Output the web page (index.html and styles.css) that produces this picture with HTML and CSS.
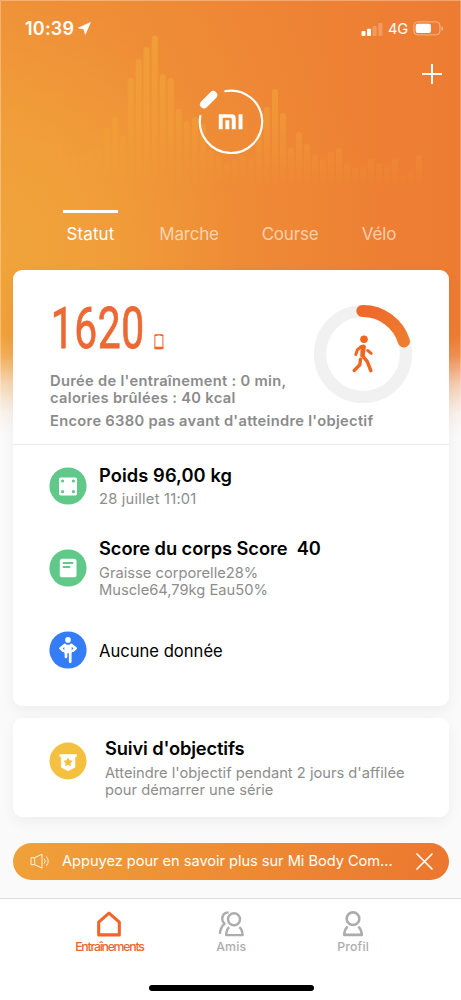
FILE: index.html
```
<!DOCTYPE html>
<html lang="fr">
<head>
<meta charset="utf-8">
<meta name="viewport" content="width=device-width, initial-scale=1">
<title>Mi Fit</title>
<link rel="stylesheet" href="styles.css">
</head>
<body>
<div class="screen">
  <div class="backdrop">
    <svg class="wave" width="461" height="200" viewBox="0 0 461 200" aria-hidden="true">
      <defs>
        <linearGradient id="waveFade" gradientUnits="userSpaceOnUse" x1="0" y1="30" x2="0" y2="188">
          <stop offset="0" stop-color="#f1a337" stop-opacity=".8"/>
          <stop offset=".6" stop-color="#f1a337" stop-opacity=".5"/>
          <stop offset="1" stop-color="#f1a337" stop-opacity="0"/>
        </linearGradient>
      </defs>
      <path stroke="url(#waveFade)" stroke-width="6" stroke-linecap="round" fill="none" d="M42.3 155V190M50.4 147V190M58.5 147V190M66.6 158V190M74.7 158V190M82.7 158V190M90.7 151V190M98.7 151V190M106.7 131V190M114.7 120V190M122.8 139V190M130.8 81V190M138.7 62V190M146.5 50V190M154.7 38.5V190M162.7 77V190M170.7 81V190M178.8 112V190M186.7 124V190M194.7 120V190M202.7 127V190M210.7 153V190M218.7 158V190M226.7 166V190M234.7 162V190M242.7 158V190M250.7 162V190M258.8 136V190M266.8 110V190M275 92V190M283 116V190M291 151V190M299 135V190M307 147V190M315 158V190M323 162V190M331 155V190M339 151V190M347 166V190M355 170V190M363 170V190M371 162V190M379 166V190M387 170V190M395 162V190M403 178V190M411 174V190M419 158V190"/>
    </svg>
  </div>

  <header class="status-bar">
    <div class="clock">
      <span class="time">10:39</span>
      <svg width="13" height="13" viewBox="0 0 13 13"><path d="M12.4.5 7.3 12.3 6 7 .4 6Z" fill="#fff" stroke="#fff" stroke-width=".7" stroke-linejoin="round"/></svg>
    </div>
    <div class="signals">
      <svg width="22" height="14" viewBox="0 0 22 14" fill="#fff"><rect x=".5" y="9" width="4" height="5" rx="1"/><rect x="6" y="6.7" width="4" height="7.3" rx="1"/><rect x="11.6" y="4" width="4" height="10" rx="1" opacity=".22"/><rect x="17.4" y="1" width="4" height="13" rx="1" opacity=".22"/></svg>
      <span class="network">4G</span>
      <svg width="31" height="15" viewBox="0 0 31 15"><rect x=".9" y=".9" width="26" height="13" rx="3.6" fill="none" stroke="#fff" stroke-opacity=".42"/><rect x="2.7" y="2.7" width="15.2" height="9.2" rx="2" fill="#fff"/><path d="M28.5 5v5q1.5-.8 1.5-2.5T28.5 5Z" fill="#fff" opacity=".5"/></svg>
    </div>
  </header>

  <div class="hero">
    <svg class="band" width="66" height="66" viewBox="0 0 66 66">
      <path d="M27.4 2.1A31.2 31.2 0 1 1 2.3 27.2" fill="none" stroke="#fff" stroke-width="2.2" stroke-linecap="round"/>
      <path d="M6 15.3 15.2 6.1" stroke="#fff" stroke-width="8" stroke-linecap="round"/>
      <path d="M20.8 25.3h13.1q3.8 0 3.8 3.8v11.1h-3.9V30.4q0-1.6-1.6-1.6h-7.5v11.4h-3.9ZM27.4 31.3h3.9v8.9h-3.9ZM40.6 25.3h3.9v14.9h-3.9Z" fill="#fff"/>
    </svg>
    <svg class="add" width="20" height="20" viewBox="0 0 20 20"><path d="M10 .7v18.6M.7 10h18.6" stroke="#fff" stroke-width="2" stroke-linecap="round"/></svg>
  </div>

  <nav class="tabs">
    <a class="tab tab-status active">Statut</a>
    <a class="tab tab-walk">Marche</a>
    <a class="tab tab-run">Course</a>
    <a class="tab tab-bike">Vélo</a>
  </nav>

  <main class="cards">
    <section class="card main-card">
      <div class="activity">
        <div class="activity-text">
          <div class="steps"><span class="count">1620</span>
            <svg class="phone" width="10" height="16" viewBox="0 0 10 16"><rect x=".9" y=".9" width="8" height="14" rx=".8" fill="none" stroke="#f0652a" stroke-width="1"/><path d="M.5 12.8h8.8v2.3H.5ZM.5.5h8.8v1.4H.5Z" fill="#f0652a"/><path d="M3.3 1.4h3.2" stroke="#fff" stroke-width=".5"/></svg>
          </div>
          <p class="summary"><span class="duration">Durée de l'entraînement : 0 min,</span><br><span class="calories">calories brûlées : 40 kcal</span></p>
          <p class="goal">Encore 6380 pas avant d'atteindre l'objectif</p>
        </div>
        <svg class="ring" width="100" height="100" viewBox="0 0 100 100">
          <defs><linearGradient id="arc" x1="0" y1="0" x2="1" y2="1"><stop stop-color="#ee682a"/><stop offset="1" stop-color="#ee7d2e"/></linearGradient></defs>
          <circle cx="50" cy="50" r="43" fill="none" stroke="#f1f1f1" stroke-width="12.2"/>
          <path d="M49.4 7A43 43 0 0 1 90.9 37.4" fill="none" stroke="url(#arc)" stroke-width="12.2" stroke-linecap="round"/>
          <g stroke="#f1661f" fill="none" stroke-linecap="round" stroke-linejoin="round">
            <circle cx="51" cy="35.2" r="3.8" fill="#f1661f" stroke="none"/>
            <path d="M47.3 42.3 50.5 41.3 52 42.4 50.7 52.2 48.2 52 48.6 44Z" fill="#f1661f" stroke-width="1.9"/>
            <path d="M48.7 42.8 44.5 45.6 42.8 50.5" stroke-width="3"/>
            <path d="M54.7 46.5 58.2 49.3" stroke-width="3"/>
            <path d="M49.8 52.2 54.3 57.7 57.8 66.7" stroke-width="3.5"/>
            <path d="M47.5 55.2 46.8 60.8 41.2 66.5" stroke-width="3.4"/>
          </g>
        </svg>
      </div>
      <div class="metrics">
        <article class="metric weight">
          <svg class="badge" width="38" height="38" viewBox="0 0 38 38"><circle cx="19" cy="19" r="18.6" fill="#60c98a"/><rect x="10" y="10.4" width="18" height="18" rx="1.7" fill="#fff"/><g fill="#60c98a"><circle cx="13.6" cy="14" r="1.6"/><circle cx="24.4" cy="14" r="1.6"/><circle cx="13.6" cy="24.7" r="1.6"/><circle cx="24.4" cy="24.7" r="1.6"/></g></svg>
          <div><h2 class="title-weight">Poids 96,00 kg</h2><p class="date">28 juillet 11:01</p></div>
        </article>
        <article class="metric score">
          <svg class="badge" width="38" height="38" viewBox="0 0 38 38"><circle cx="19" cy="19" r="18.6" fill="#60c98a"/><rect x="10.8" y="9.7" width="16.7" height="18.6" rx="2.6" fill="#fff"/><path d="M14.5 14h9M14.5 18h6" stroke="#60c98a" stroke-width="1.9" stroke-linecap="round"/></svg>
          <div><h2 class="title-score">Score du corps Score&nbsp; 40</h2><p class="body-stats">Graisse corporelle28%<br>Muscle64,79kg Eau50%</p></div>
        </article>
        <article class="metric posture">
          <svg class="badge" width="38" height="38" viewBox="0 0 38 38"><circle cx="19" cy="19" r="18.6" fill="#357df6"/><circle cx="19" cy="8.9" r="2.8" fill="#fff"/><path d="M15.3 13.7h7.4v8.6h-7.4Z" fill="#fff"/><path d="M16 13.9 11.6 17.3 14.2 19.8M22.2 13.9 26.6 17.3 24 19.8M17 20v6M21.2 20v10.8" fill="none" stroke="#fff" stroke-width="2.7" stroke-linecap="round" stroke-linejoin="round"/></svg>
          <h3>Aucune donnée</h3>
        </article>
      </div>
    </section>

    <section class="card streak">
      <svg class="badge" width="38" height="38" viewBox="0 0 38 38"><circle cx="19" cy="19" r="18.5" fill="#f3c03f"/><path d="M10.7 12.6H27.6v1.9H26v10.8l-6.9 3.5-6.8-3.5V14.5h-1.6Z" fill="#fff" stroke="#fff" stroke-width=".6" stroke-linejoin="round"/><path d="m19.1 15.4 1.5 2.9 3.2.5-2.2 2.3.4 3.1-2.9-1.4-2.9 1.4.4-3.1-2.2-2.3 3.2-.5Z" fill="#f3c03f"/></svg>
      <div><h2 class="title-streak">Suivi d'objectifs</h2><p>Atteindre l'objectif pendant 2 jours d'affilée<br>pour démarrer une série</p></div>
    </section>

    <aside class="banner">
      <svg width="20" height="16" viewBox="0 0 20 16" fill="none" stroke="#fff" stroke-width="1" stroke-opacity=".85"><path d="M1 4.7h3.7v7H1ZM4.7 4.7 12 1.2v13.9l-7.3-3.4M14.2 5.7q2 2.4 0 4.9M16.3 3.4q3.8 4.8 0 9.5"/></svg>
      <span class="banner-text">Appuyez pour en savoir plus sur Mi Body Com...</span>
      <svg class="close" width="17" height="17" viewBox="0 0 17 17"><path d="m1 1 15 15M16 1 1 16" stroke="#fff" stroke-width="1.7" stroke-linecap="round"/></svg>
    </aside>
  </main>

  <footer class="bottom-nav">
    <a class="nav-item current"><svg width="28" height="28" viewBox="0 0 28 28"><path d="M3.7 12.1 14 3.1l10.3 9v12.8H3.7Z" fill="none" stroke="#f0652a" stroke-width="3.1" stroke-linejoin="round"/></svg><span>Entraînements</span></a>
    <a class="nav-item"><svg width="28" height="28" viewBox="0 0 28 28" fill="none" stroke="#acacac" stroke-width="2.4" stroke-linejoin="round"><circle cx="17" cy="9.3" r="6"/><path d="M12.2 17.2Q9.5 19 9.2 25.1H25.6Q25.3 19.5 22.4 17.1M11.6 2.4Q5.3 2.7 5.2 9q.1 2.8 2.4 4.7Q3.5 16.8 2.8 23.8"/></svg><span>Amis</span></a>
    <a class="nav-item"><svg width="28" height="28" viewBox="0 0 28 28" fill="none" stroke="#acacac" stroke-width="2.6" stroke-linejoin="round"><circle cx="14" cy="8.7" r="6.3"/><path d="M8.7 16.8Q5.4 19.3 5.2 24.9H22.8Q22.5 19.4 19.3 16.8"/></svg><span>Profil</span></a>
  </footer>
  <div class="home-indicator"></div>
</div>
</body>
</html>
```
FILE: styles.css
```
* { box-sizing: border-box; }
body { margin: 0; background: #fafafa; font-family: Inter, "Liberation Sans", sans-serif; }
h2, h3, p { margin: 0; }
svg { display: block; flex: none; }
.screen { position: relative; width: 461px; height: 1000px; overflow: hidden; display: flex; flex-direction: column; background: #fafafa; }
.backdrop {
  position: absolute; top: 0; left: 0; width: 461px; height: 440px;
  background: radial-gradient(ellipse 400px 400px at -20px 250px, #f1a53b 0%, rgba(241,162,58,.85) 30%, rgba(240,150,56,.35) 65%, rgba(238,135,54,0) 100%), linear-gradient(90deg, #ee8d37, #ee8535 50%, #ed7c33);
  -webkit-mask-image: linear-gradient(#000 335px, rgba(0,0,0,.85) 355px, rgba(0,0,0,.35) 385px, rgba(0,0,0,.08) 412px, transparent 435px);
  mask-image: linear-gradient(#000 335px, rgba(0,0,0,.85) 355px, rgba(0,0,0,.35) 385px, rgba(0,0,0,.08) 412px, transparent 435px);
  box-shadow: inset 1px 1px 0 rgba(255,255,255,.3), inset -1px 0 0 rgba(255,255,255,.25);
}
.status-bar, .hero, .tabs, .cards, .bottom-nav, .home-indicator { position: relative; flex: none; }
.status-bar { height: 57px; display: flex; justify-content: space-between; color: #fff; padding: 0 17px 0 25px; }
.clock, .signals { display: flex; align-items: center; height: 57px; }
.clock { gap: 4px; }
.time { font-size: 18px; font-weight: 600; letter-spacing: .2px; }
.signals { gap: 5px; }
.network { font-size: 14.7px; letter-spacing: -.2px; }
.hero { height: 153px; display: flex; justify-content: space-between; padding: 7px 19px 0 198px; }
.band { margin-top: 25px; }
.tabs { height: 60px; display: flex; padding-left: 63px; color: rgba(255,255,255,.62); font-size: 17px; line-height: 42px; }
.tab { height: 45px; border-top: 3px solid transparent; text-align: center; white-space: nowrap; }
.active { border-color: #fff; color: #fff; }
.tab-status { width: 55px; margin-right: 35px; letter-spacing: .1px; }
.tab-walk { width: 72px; margin-right: 29px; letter-spacing: -.2px; }
.tab-run { width: 72px; margin-right: 23px; letter-spacing: -.2px; }
.tab-bike { width: 60px; letter-spacing: -.2px; }
.cards { height: 628px; padding: 0 12px 0 13px; }
.card { background: #fff; border-radius: 9px; box-shadow: 0 5px 14px rgba(0,0,0,.05); }
.main-card { height: 436px; margin-bottom: 12px; }
.activity { height: 175px; display: flex; justify-content: space-between; border-bottom: 1px solid #e9e9e9; padding: 0 36px 0 37px; color: #8b8b8b; }
.activity-text { width: 263px; white-space: nowrap; }
.steps { display: flex; height: 102.6px; padding-top: 25px; }
.count { width: 104px; font: 400 57.5px/67px Roboto, sans-serif; -webkit-text-stroke: .8px #ec6933; letter-spacing: .8px; color: #ec6933; transform: translateX(.7px) scaleX(.71); transform-origin: 0 50%; }
.phone { margin-top: 39px; }
.summary, .goal { font-size: 14.7px; line-height: 17.3px; font-weight: 600; letter-spacing: .3px; }
.goal { margin-top: 5.7px; }
.ring { margin-top: 34px; }
.metrics { padding: 18.6px 37px 0 36px; }
.metric { display: flex; align-items: center; gap: 12px; }
h2 { font-size: 18.3px; line-height: 22px; font-weight: 600; color: #000; white-space: nowrap; }
h3 { font-size: 16.6px; line-height: 22px; font-weight: 400; color: #000; white-space: nowrap; padding-top: 1px; }
.title-weight { letter-spacing: .08px; }
.title-score { letter-spacing: -.06px; }
.title-streak { letter-spacing: -.14px; }
.metric p, .streak p { margin-top: 5.9px; font-size: 14.7px; line-height: 17.3px; color: #8d8d8d; white-space: nowrap; }
.metric .date { letter-spacing: .22px; }
.metric .body-stats { letter-spacing: 0; }
.score { margin-top: 28.3px; }
.posture { margin-top: 31.5px; }
.streak { height: 99px; display: flex; gap: 18px; padding: 19px 0 0 36px; }
.streak .badge { margin-top: 5.3px; }
.banner { margin-top: 25.6px; height: 37px; border-radius: 19px; display: flex; align-items: center; padding: 0 16px 0 17px; background: linear-gradient(110deg, #f0a139, #ec762f); color: #fff; }
.banner-text { flex: 1; margin-left: 12px; font-size: 14.7px; letter-spacing: -.07px; white-space: nowrap; }
.bottom-nav { height: 78px; display: flex; padding: 11px 47px 0 48.5px; background: #fff; border-top: 1px solid #dedede; }
.nav-item { flex: 1; display: flex; flex-direction: column; align-items: center; color: #adadad; font-size: 12.3px; line-height: 16px; font-weight: 500; letter-spacing: .15px; }
.nav-item span { padding-top: .5px; }
.current { color: #f0652a; letter-spacing: -1.25px; }
.screen::after { content: ""; order: 1; flex: 1; background: #fff; }
.home-indicator { width: 100%; height: 24px; background: #fff; padding-top: 8.5px; }
.home-indicator::before { content: ""; display: block; width: 165px; height: 6.3px; border-radius: 4px; background: #000; margin-left: 148.5px; }
```
